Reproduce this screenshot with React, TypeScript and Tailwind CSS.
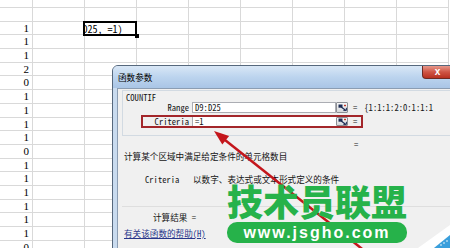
import React from "react";

function RefButton({ h }: { h: string }) {
  return (
    <div className={`w-[12px] ${h} shrink-0 flex items-center justify-center border border-[#8c8f94] bg-gradient-to-b from-[#f8f8f8] to-[#d6d8db] rounded-[1px]`}>
      <svg width="9" height="7" viewBox="0 0 9 7">
        <rect x="0.5" y="0.5" width="4" height="3.2" fill="#1d2c55" />
        <path d="M3.2 3 L7.6 6.2" stroke="#1d2c55" strokeWidth="1.2" />
        <path d="M5.4 6.4 L8.4 6.4 L8.4 3.8" fill="none" stroke="#1d2c55" strokeWidth="1" />
        <rect x="6" y="0.8" width="2" height="1.4" fill="#c0392b" />
      </svg>
    </div>
  );
}

export default function App() {
  const values = [1, 1, 1, 2, 0, 1, 1, 1, 1, 0, 1, 1, 1, 1, 1, 1, 0];
  const rows: (number | null)[] = [null, null, ...values];
  const cols = Array.from({ length: 9 }, (_, i) => i);

  return (
    <div className="relative w-[450px] h-[248px] overflow-hidden bg-white">
      {/* spreadsheet grid */}
      <div className="grid grid-cols-[33px_repeat(8,52px)] grid-rows-[8px_13.7px] auto-rows-[13.7px] font-['Liberation_Serif',serif] text-[11px] text-black">
        {rows.map((v, r) =>
          cols.map((c) => {
            if (r === 2 && c === 2) {
              return (
                <div key={`${r}-${c}`} className="relative border-r border-b border-[#d9d9d9]">
                  <div className="absolute left-[-2px] right-[-1px] top-[-1px] bottom-[-2px] border-2 border-black overflow-hidden z-10 bg-white">
                    <div className="ml-[-2.5px] whitespace-nowrap font-['Noto_Sans_Mono_CJK_SC','Liberation_Mono',monospace] text-[10px] leading-[12px]">
                      D25, =1)
                    </div>
                  </div>
                  <div className="absolute right-[-3px] bottom-[-4px] w-[4px] h-[4px] bg-black z-10" />
                </div>
              );
            }
            return (
              <div
                key={`${r}-${c}`}
                className="border-r border-b border-[#d9d9d9] text-right pr-[3px] leading-[13px]"
              >
                {c === 0 && v !== null ? v : null}
              </div>
            );
          })
        )}
      </div>

      {/* dialog window */}
      <div className="absolute left-[112px] top-[65px] w-[352px] h-[200px] flex flex-col border border-[#56687d] rounded-t-[6px] bg-[#c9dbef] overflow-hidden font-['Noto_Sans_Mono_CJK_SC','Noto_Sans_CJK_SC',monospace] text-[8.6px] text-[#151515]">
        <div className="relative h-[22px] shrink-0 flex items-center pl-[5px] bg-gradient-to-b from-[#d9e7f6] via-[#bcd4ee] to-[#a9c5e6]">
          <span className="text-black leading-[10px]">函数参数</span>
          <div className="absolute left-[309px] top-0 w-[31px] h-[13px] flex items-center justify-center rounded-b-[4px] border border-t-0 border-[#6e2a22] bg-gradient-to-b from-[#e6988c] via-[#cf5444] to-[#b8301f] text-white font-['Liberation_Sans',sans-serif] font-bold text-[10px] leading-none">
            x
          </div>
        </div>
        <div className="flex-1 ml-[4px] border-l border-t border-[#8b9db3] bg-[#f0f0f0] flex flex-col">
          {/* group box */}
          <div className="ml-[4px] mt-[1px] w-[340px] h-[46px] shrink-0 border border-[#d2dae2] flex flex-col overflow-hidden">
            <div className="ml-[3px] mt-[2px] h-[9px] leading-[9px]">COUNTIF</div>
            <div className="flex items-center h-[11px]">
              <div className="w-[67px] shrink-0 text-right pr-[1px] leading-[11px]">Range</div>
              <div className="ml-[2px] w-[144px] shrink-0 h-[11px] bg-white border border-[#abadb3] pl-[2px] leading-[9px]">D9:D25</div>
              <RefButton h="h-[11px]" />
              <div className="ml-[5px] shrink-0 leading-[11px]">=</div>
              <div className="ml-[7px] shrink-0 leading-[11px] whitespace-nowrap">{"{1:1:1:2:0:1:1:1"}</div>
            </div>
            <div className="ml-[18px] mt-[2px] w-[222px] h-[13px] shrink-0 border-2 border-[#a3262a] flex items-center">
              <div className="w-[47px] shrink-0 text-right pr-[1px] leading-[9px]">Criteria</div>
              <div className="ml-[2px] w-[144px] shrink-0 h-[9px] bg-white border-l border-[#abadb3] pl-[2px] leading-[9px]">=1</div>
              <RefButton h="h-[9px]" />
              <div className="ml-[5px] shrink-0 leading-[9px]">=</div>
            </div>
          </div>
          <div className="mt-[4px] h-[9px] leading-[9px] pl-[236px]">=</div>
          <div className="mt-[3px] h-[9px] leading-[9px] pl-[6px] whitespace-nowrap">计算某个区域中满足给定条件的单元格数目</div>
          <div className="mt-[14px] h-[9px] leading-[9px] pl-[27px] flex whitespace-nowrap">
            <div className="w-[48px] shrink-0">Criteria</div>
            <div>以数字、表达式或文本形式定义的条件</div>
          </div>
          <div className="mt-[22px] ml-[4px] h-px w-[340px] bg-[#dedede]" />
          <div className="mt-[6px] h-[9px] leading-[9px] pl-[35px] whitespace-nowrap">计算结果 =</div>
          <div className="mt-[7px] h-[10px] leading-[9px] pl-[6px] whitespace-nowrap">
            <span className="underline text-[#28378a]">有关该函数的帮助(H)</span>
          </div>
        </div>
      </div>

      {/* arrow and corner mark */}
      <svg className="absolute left-0 top-0 pointer-events-none" width="450" height="248" viewBox="0 0 450 248">
        <line x1="366" y1="252" x2="225" y2="140" stroke="#c4161c" strokeWidth="2.5" />
        <polygon points="214,131 229.1,136 222.3,144.6" fill="#c4161c" />
        <polygon points="418,248 450,225 450,235 434,248" fill="#ffffff" />
        <polygon points="434,248 450,235 450,248" fill="#3a9fdc" />
        <circle cx="441" cy="245" r="0.8" fill="#ffffff" />
        <circle cx="444" cy="243" r="0.8" fill="#ffffff" />
        <circle cx="447" cy="241" r="0.8" fill="#ffffff" />
      </svg>

      {/* watermark */}
      <div className="absolute left-[227px] top-[182px] text-[36px] leading-[36px] font-black text-[#26b24a] font-['Noto_Sans_CJK_SC',sans-serif] whitespace-nowrap">
        技术员联盟
      </div>
      <div className="absolute left-[227px] top-[222px] w-[180px] h-[21px] rounded-[10px] bg-[#26b24a] flex items-center justify-center text-white font-bold text-[16px] tracking-[2px] font-['Liberation_Sans',sans-serif] leading-none">
        www.jsgho.com
      </div>
    </div>
  );
}
